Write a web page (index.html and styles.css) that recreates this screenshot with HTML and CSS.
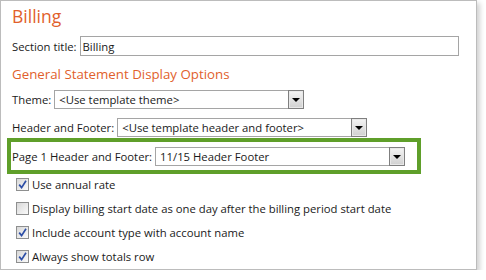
FILE: index.html
```html
<!DOCTYPE html>
<html lang="en">
<head>
    <meta charset="UTF-8">
    <title>Billing</title>
    <link rel="stylesheet" href="styles.css">
</head>
<body>
    <div class="panel">
        <h1>Billing</h1>

        <div class="row row-title">
            <label for="section_title">Section title:</label>
            <input type="text" id="section_title" class="text-input" value="Billing">
        </div>

        <h2>General Statement Display Options</h2>

        <div class="row row-theme">
            <label>Theme:</label>
            <div class="select">
                <span class="select-text">&lt;Use template theme&gt;</span>
                <span class="select-btn"><span class="arrow"></span></span>
            </div>
        </div>

        <div class="row row-header">
            <label>Header and Footer:</label>
            <div class="select">
                <span class="select-text">&lt;Use template header and footer&gt;</span>
                <span class="select-btn"><span class="arrow"></span></span>
            </div>
        </div>

        <div class="highlight">
            <div class="row">
                <label>Page 1 Header and Footer:</label>
                <div class="select">
                    <span class="select-text">11/15 Header Footer</span>
                    <span class="select-btn"><span class="arrow"></span></span>
                </div>
            </div>
        </div>

        <div class="checks">
            <div class="check">
                <span class="box"><svg viewBox="0 0 9 9" width="9" height="9"><path d="M1.2 4.6 L3.6 7.6 L8 0.8" fill="none" stroke="#2c4ea6" stroke-width="1.7"/></svg></span>
                <span>Use annual rate</span>
            </div>
            <div class="check">
                <span class="box"></span>
                <span>Display billing start date as one day after the billing period start date</span>
            </div>
            <div class="check">
                <span class="box"><svg viewBox="0 0 9 9" width="9" height="9"><path d="M1.2 4.6 L3.6 7.6 L8 0.8" fill="none" stroke="#2c4ea6" stroke-width="1.7"/></svg></span>
                <span>Include account type with account name</span>
            </div>
            <div class="check">
                <span class="box"><svg viewBox="0 0 9 9" width="9" height="9"><path d="M1.2 4.6 L3.6 7.6 L8 0.8" fill="none" stroke="#2c4ea6" stroke-width="1.7"/></svg></span>
                <span>Always show totals row</span>
            </div>
        </div>
    </div>
</body>
</html>
```

FILE: styles.css
```css
body {
    margin: 0;
    background-color: #fff;
    font-family: "Open Sans", "Noto Sans", sans-serif;
    font-size: 11.3px;
    color: #1a1a1a;
}

.panel {
    width: 477px;
    height: 270px;
    box-sizing: border-box;
    padding: 0 0 0 11px;
    border: 1px solid #bcbcbc;
    background: #fff;
    box-shadow: 3px 3px 5px rgba(0, 0, 0, 0.18);
}

h1 {
    margin: 3px 0 0;
    font-size: 17.5px;
    font-weight: normal;
    line-height: 24px;
    color: #e15f2c;
}

h2 {
    margin: 8px 0 0;
    font-size: 13.3px;
    font-weight: normal;
    line-height: 20px;
    color: #e15f2c;
}

.row {
    display: flex;
    align-items: center;
    height: 19px;
}

.row label {
    margin-right: 3px;
    white-space: nowrap;
}

.row-title {
    height: 20px;
    margin-top: 8px;
}

.row-theme {
    margin-top: 6px;
}

.row-header {
    margin-top: 9px;
}

.text-input {
    width: 379px;
    height: 20px;
    box-sizing: border-box;
    margin: 0;
    padding: 0 2px;
    border: 1px solid #a5a5a5;
    font: inherit;
    color: inherit;
}

.select {
    display: flex;
    width: 250px;
    height: 19px;
    box-sizing: border-box;
    border: 1px solid #a5a5a5;
    background: #fff;
}

.select-text {
    flex: 1;
    padding-left: 4px;
    line-height: 17px;
    white-space: nowrap;
    overflow: hidden;
}

.select-btn {
    display: flex;
    align-items: center;
    justify-content: center;
    width: 14px;
    margin: -1px -1px -1px 0;
    border: 1px solid #7f7f7f;
    box-shadow: inset 0 0 0 1px #e8e8e8;
    background: linear-gradient(#f4f4f4, #d0d0d0);
}

.arrow {
    width: 0;
    height: 0;
    border-left: 4px solid transparent;
    border-right: 4px solid transparent;
    border-top: 4px solid #000;
    margin-top: 1px;
}

.highlight {
    width: 405px;
    margin: 1px 0 0 -5px;
    padding: 5px 0 4px 1px;
    border: 4px solid #5f9f2a;
}

.checks {
    margin-top: -2px;
    padding-left: 4px;
}

.check {
    display: flex;
    align-items: center;
    height: 24px;
}

.box {
    display: flex;
    align-items: center;
    justify-content: center;
    width: 11px;
    height: 11px;
    margin-right: 3px;
    border: 1px solid #8e8f8f;
    background: linear-gradient(135deg, #d8d8d8, #fafafa);
}
```
